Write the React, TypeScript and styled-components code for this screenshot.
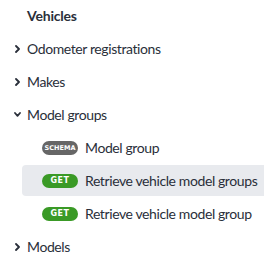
import React from "react";
import styled, { createGlobalStyle } from "styled-components";

const Global = createGlobalStyle`
  html, body { margin: 0; padding: 0; background: #ffffff; }
  body { font-family: Lato, "Noto Sans", sans-serif; color: #2a2f3a; }
`;

const Nav = styled.nav`
  width: 264px;
  display: flex;
  flex-direction: column;
  gap: 2px;
  overflow: hidden;
`;

const Heading = styled.div`
  height: 31px;
  display: flex;
  align-items: center;
  padding-left: 27px;
  font-size: 14px;
  font-weight: 700;
  letter-spacing: -0.2px;
  color: #2a2f3a;
`;

const GroupRow = styled.div`
  height: 31px;
  display: flex;
  align-items: center;
  gap: 6px;
  padding-left: 14px;
  font-size: 14px;
  letter-spacing: -0.4px;
  white-space: nowrap;
`;

const Chevron = styled.span`
  width: 7px;
  height: 8px;
  display: flex;
  align-items: center;
  justify-content: center;
`;

const ItemRow = styled.div<{ $active?: boolean }>`
  height: 31px;
  margin-left: 22px;
  padding-left: 20px;
  display: flex;
  align-items: center;
  gap: 7px;
  border-radius: 4px 0 0 4px;
  background: ${(p) => (p.$active ? "#e8eaee" : "transparent")};
  font-size: 14px;
  letter-spacing: -0.4px;
  white-space: nowrap;
`;

const Badge = styled.span<{ $kind: "get" | "schema" }>`
  width: 36px;
  height: 14px;
  border-radius: 7px;
  background: ${(p) => (p.$kind === "get" ? "#3a9a26" : "#666666")};
  color: #ffffff;
  font-family: "DejaVu Sans", sans-serif;
  font-weight: 700;
  font-size: ${(p) => (p.$kind === "get" ? "8px" : "6.5px")};
  letter-spacing: ${(p) => (p.$kind === "get" ? "0.5px" : "0")};
  display: flex;
  align-items: center;
  justify-content: center;
  flex-shrink: 0;
`;

const Right = () => (
  <svg width="5" height="8" viewBox="0 0 5 8">
    <path d="M1 1 L4 4 L1 7" fill="none" stroke="#2a2f3a" strokeWidth="1.8" strokeLinecap="round" strokeLinejoin="round" />
  </svg>
);

const Down = () => (
  <svg width="7" height="5" viewBox="0 0 7 5">
    <path d="M1 1 L3.5 3.8 L6 1" fill="none" stroke="#2a2f3a" strokeWidth="1.8" strokeLinecap="round" strokeLinejoin="round" />
  </svg>
);

export default function App() {
  return (
    <>
      <Global />
      <Nav>
        <Heading>Vehicles</Heading>
        <GroupRow>
          <Chevron><Right /></Chevron>Odometer registrations
        </GroupRow>
        <GroupRow>
          <Chevron><Right /></Chevron>Makes
        </GroupRow>
        <GroupRow>
          <Chevron><Down /></Chevron>Model groups
        </GroupRow>
        <ItemRow>
          <Badge $kind="schema">SCHEMA</Badge>Model group
        </ItemRow>
        <ItemRow $active>
          <Badge $kind="get">GET</Badge>Retrieve vehicle model groups
        </ItemRow>
        <ItemRow>
          <Badge $kind="get">GET</Badge>Retrieve vehicle model group
        </ItemRow>
        <GroupRow>
          <Chevron><Right /></Chevron>Models
        </GroupRow>
      </Nav>
    </>
  );
}
